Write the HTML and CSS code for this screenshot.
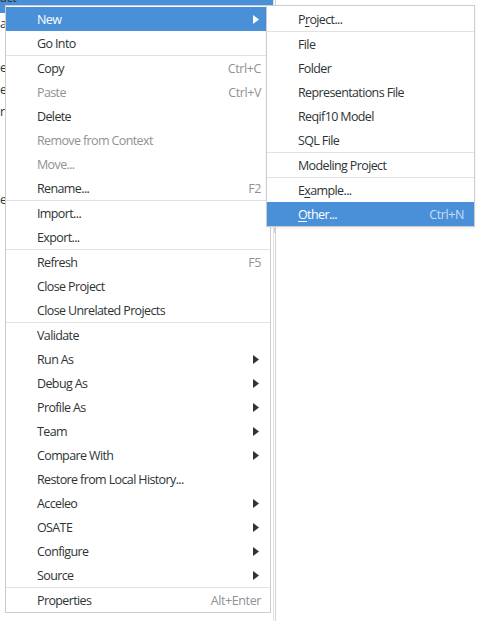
FILE: index.html
```html
<!DOCTYPE html>
<html lang="en">
<head>
<meta charset="utf-8">
<title>Context menu</title>
<link rel="stylesheet" href="styles.css">
</head>
<body>
<div class="workspace">
  <div class="tree">
    <div class="tree-row selected">act</div>
    <div class="tree-row">a</div>
    <div class="tree-row"></div>
    <div class="tree-row">e.</div>
    <div class="tree-row">er</div>
    <div class="tree-row">rl</div>
    <div class="tree-row"></div>
    <div class="tree-row"></div>
    <div class="tree-row"></div>
    <div class="tree-row">es</div>
  </div>
  <div class="gutter"><span class="thumb"></span></div>
  <div class="editor"></div>
</div>

<div class="menu main-menu">
  <div class="item active"><span class="label">New</span><svg class="arrow" viewBox="0 0 6 9"><polygon points="0,0 6,4.5 0,9"/></svg></div>
  <div class="item"><span class="label">Go Into</span></div>
  <div class="sep"></div>
  <div class="item"><span class="label">Copy</span><span class="key">Ctrl+C</span></div>
  <div class="item disabled"><span class="label">Paste</span><span class="key">Ctrl+V</span></div>
  <div class="item"><span class="label">Delete</span></div>
  <div class="item disabled"><span class="label">Remove from Context</span></div>
  <div class="item disabled"><span class="label">Move...</span></div>
  <div class="item"><span class="label">Rename...</span><span class="key">F2</span></div>
  <div class="sep"></div>
  <div class="item"><span class="label">Import...</span></div>
  <div class="item"><span class="label">Export...</span></div>
  <div class="sep"></div>
  <div class="item"><span class="label">Refresh</span><span class="key">F5</span></div>
  <div class="item"><span class="label">Close Project</span></div>
  <div class="item"><span class="label">Close Unrelated Projects</span></div>
  <div class="sep"></div>
  <div class="item"><span class="label">Validate</span></div>
  <div class="item"><span class="label">Run As</span><svg class="arrow" viewBox="0 0 6 9"><polygon points="0,0 6,4.5 0,9"/></svg></div>
  <div class="item"><span class="label">Debug As</span><svg class="arrow" viewBox="0 0 6 9"><polygon points="0,0 6,4.5 0,9"/></svg></div>
  <div class="item"><span class="label">Profile As</span><svg class="arrow" viewBox="0 0 6 9"><polygon points="0,0 6,4.5 0,9"/></svg></div>
  <div class="item"><span class="label">Team</span><svg class="arrow" viewBox="0 0 6 9"><polygon points="0,0 6,4.5 0,9"/></svg></div>
  <div class="item"><span class="label">Compare With</span><svg class="arrow" viewBox="0 0 6 9"><polygon points="0,0 6,4.5 0,9"/></svg></div>
  <div class="item"><span class="label">Restore from Local History...</span></div>
  <div class="item"><span class="label">Acceleo</span><svg class="arrow" viewBox="0 0 6 9"><polygon points="0,0 6,4.5 0,9"/></svg></div>
  <div class="item"><span class="label">OSATE</span><svg class="arrow" viewBox="0 0 6 9"><polygon points="0,0 6,4.5 0,9"/></svg></div>
  <div class="item"><span class="label">Configure</span><svg class="arrow" viewBox="0 0 6 9"><polygon points="0,0 6,4.5 0,9"/></svg></div>
  <div class="item"><span class="label">Source</span><svg class="arrow" viewBox="0 0 6 9"><polygon points="0,0 6,4.5 0,9"/></svg></div>
  <div class="sep"></div>
  <div class="item"><span class="label">Properties</span><span class="key">Alt+Enter</span></div>
</div>

<div class="menu sub-menu">
  <div class="item"><span class="label">P<u>r</u>oject...</span></div>
  <div class="sep"></div>
  <div class="item"><span class="label">File</span></div>
  <div class="item"><span class="label">Folder</span></div>
  <div class="item"><span class="label">Representations File</span></div>
  <div class="item"><span class="label">Reqif10 Model</span></div>
  <div class="item"><span class="label">SQL File</span></div>
  <div class="sep"></div>
  <div class="item"><span class="label">Modeling Project</span></div>
  <div class="sep"></div>
  <div class="item"><span class="label">E<u>x</u>ample...</span></div>
  <div class="item active"><span class="label"><u>O</u>ther...</span><span class="key">Ctrl+N</span></div>
</div>
</body>
</html>
```

FILE: styles.css
```css
html, body {
  margin: 0;
  padding: 0;
  width: 479px;
  height: 621px;
  overflow: hidden;
  background: #ffffff;
  font-family: "Open Sans", "Noto Sans", sans-serif;
  font-size: 12.5px;
  color: #2e3436;
}

.workspace {
  display: flex;
  height: 621px;
}

.tree {
  width: 273px;
  border-right: 1px solid #e2e2e2;
  margin-top: -9px;
  overflow: hidden;
}

.tree-row {
  height: 22px;
  line-height: 22px;
  white-space: nowrap;
  color: #2e3436;
  letter-spacing: -0.3px;
}

.tree-row.selected {
  background: #4a90d9;
  line-height: 14px;
}

.gutter {
  width: 1px;
  border-right: 1px solid #d4d4d4;
  position: relative;
}

.thumb {
  position: absolute;
  left: 0;
  top: 228px;
  width: 2px;
  height: 5px;
  background: #d0d0d0;
}

.editor {
  flex: 1;
  background: #ffffff;
}

.menu {
  position: absolute;
  background: #ffffff;
  border: 1px solid #cdcdcd;
  padding: 1px 0 0;
  letter-spacing: -0.62px;
}

.main-menu {
  left: 5px;
  top: 5px;
  width: 264px;
}

.sub-menu {
  left: 266px;
  top: 5px;
  width: 207px;
  box-shadow: 0 1px 2px rgba(0, 0, 0, 0.08);
}

.item {
  display: flex;
  align-items: center;
  height: 24px;
  padding: 0 9px 0 31px;
  white-space: nowrap;
}

.sub-menu .item {
  padding-right: 10px;
}

.label {
  flex: 1;
}

.key {
  color: #8f9293;
  letter-spacing: -0.4px;
}

.item.disabled {
  color: #8f9293;
}

.item.active {
  background: #4a90d9;
  color: #ffffff;
}

.item.active .key {
  color: #c8dcf2;
}

.arrow {
  width: 6px;
  height: 9px;
  margin-right: 2px;
  fill: #2e3436;
}

.item.active .arrow {
  fill: #ffffff;
}

.sep {
  height: 1px;
  background: #e3e3e3;
}

u {
  text-decoration-thickness: 1px;
  text-underline-offset: 2px;
}
```
